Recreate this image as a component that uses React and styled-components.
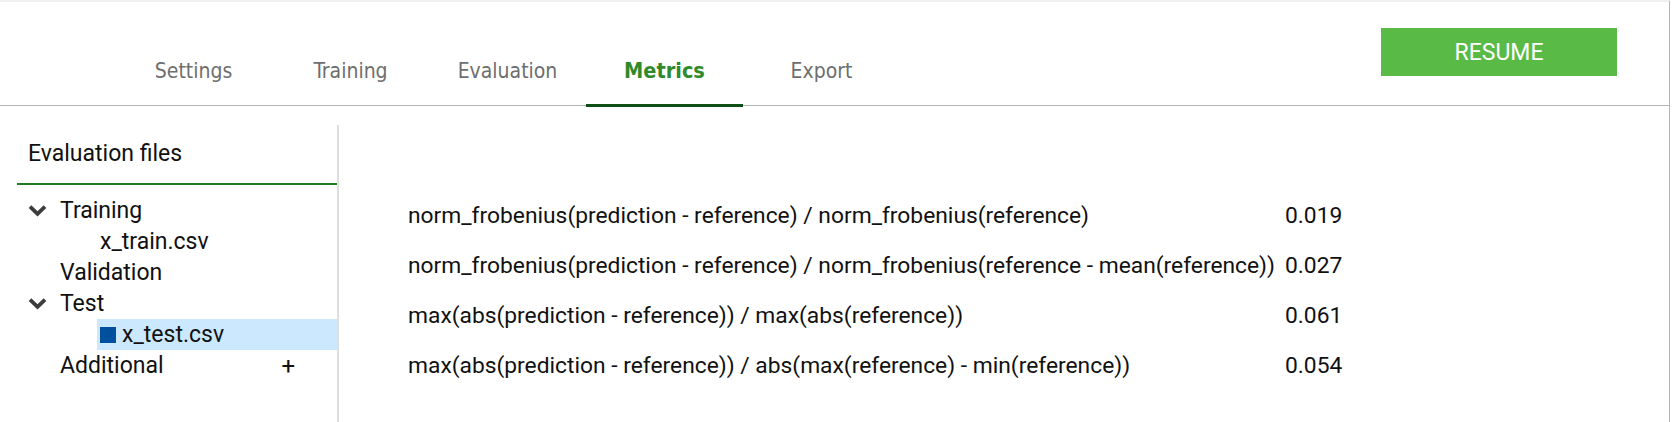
import React from 'react'
import styled, { createGlobalStyle } from 'styled-components';

const GlobalStyle = createGlobalStyle`
    html, body {
        margin : 0;
        padding : 0;
        background-color : #fff;
    }
`;

const Page = styled.div`
    width : 1670px;
    height : 422px;
    border-right : 1px solid #b4b4b4;
    border-top : 2px solid #f0f0f0;
    box-sizing : border-box;
    display : flex;
    flex-direction : column;
    overflow : hidden;
`;

const Header = styled.div`
    display : flex;
    align-items : flex-end;
    height : 103px;
    padding : 0 52px 0 115px;
    border-bottom : 1px solid #b4b4b4;
    flex-shrink : 0;
`;

const Tab = styled.div`
    width : 157px;
    text-align : center;
    font-family : "DejaVu Sans Condensed", "DejaVu Sans", sans-serif;
    font-size : ${props => props.$active ? '21.5px' : '21px'};
    line-height : 30px;
    padding-bottom : 18px;
    margin-bottom : -2px;
    color : ${props => props.$active ? '#2f8a2a' : '#6e6e6e'};
    font-weight : ${props => props.$active ? 'bold' : 'normal'};
    border-bottom : 3px solid ${props => props.$active ? '#0d4f14' : 'transparent'};
`;

const ResumeButton = styled.button`
    align-self : flex-start;
    margin : 26px 0 0 auto;
    width : 236px;
    height : 48px;
    border : none;
    background-color : #59bb45;
    color : #fff;
    font-family : Roboto, sans-serif;
    font-size : 23px;
    cursor : pointer;
`;

const Body = styled.div`
    display : flex;
    flex : 1;
    min-height : 0;
`;

const Sidebar = styled.div`
    width : 337px;
    margin-top : 19px;
    border-right : 2px solid #dedede;
    flex-shrink : 0;
    font-family : Roboto, sans-serif;
    font-size : 23px;
    color : #111;
`;

const SidebarTitle = styled.div`
    margin-left : 17px;
    padding : 14px 0 14px 11px;
    line-height : 30px;
    border-bottom : 2px solid #1f7a23;
`;

const Tree = styled.div`
    padding-top : 10px;
`;

const TreeRow = styled.div`
    display : flex;
    align-items : center;
    height : 31px;
    margin-left : ${props => props.$level === 1 ? '97px' : '0'};
    padding-left : ${props => props.$level === 1 ? '3px' : '28px'};
    background-color : ${props => props.$selected ? '#cce8ff' : 'transparent'};
`;

const Toggle = styled.span`
    width : 32px;
    display : flex;
    align-items : center;
    flex-shrink : 0;
`;

const FileMark = styled.span`
    width : 16px;
    height : 16px;
    margin-right : 6px;
    background-color : #00509d;
`;

const AddButton = styled.span`
    margin-left : auto;
    margin-right : 42px;
    font-size : 24px;
`;

const Content = styled.div`
    flex : 1;
    padding : 84px 0 0 69px;
`;

const MetricsTable = styled.div`
    display : grid;
    grid-template-columns : max-content max-content;
    grid-auto-rows : 50px;
    column-gap : 10px;
    align-items : center;
    font-family : Roboto, sans-serif;
    font-size : 22.8px;
    color : #111;
`;

const Chevron = () => (
    <svg width='19' height='13' viewBox='0 0 19 13'>
        <path d='M2 2.6 L9.5 9.8 L17 2.6' fill='none' stroke='#3c3c3c' strokeWidth='3.8' />
    </svg>
)

const metrics = [
    ['norm_frobenius(prediction - reference) / norm_frobenius(reference)', '0.019'],
    ['norm_frobenius(prediction - reference) / norm_frobenius(reference - mean(reference))', '0.027'],
    ['max(abs(prediction - reference)) / max(abs(reference))', '0.061'],
    ['max(abs(prediction - reference)) / abs(max(reference) - min(reference))', '0.054'],
];

const App = () => {
    return (
        <Page>
            <GlobalStyle />
            <Header>
                <Tab>Settings</Tab>
                <Tab>Training</Tab>
                <Tab>Evaluation</Tab>
                <Tab $active>Metrics</Tab>
                <Tab>Export</Tab>
                <ResumeButton>RESUME</ResumeButton>
            </Header>
            <Body>
                <Sidebar>
                    <SidebarTitle>Evaluation files</SidebarTitle>
                    <Tree>
                        <TreeRow><Toggle><Chevron /></Toggle>Training</TreeRow>
                        <TreeRow $level={1}>x_train.csv</TreeRow>
                        <TreeRow><Toggle />Validation</TreeRow>
                        <TreeRow><Toggle><Chevron /></Toggle>Test</TreeRow>
                        <TreeRow $level={1} $selected><FileMark />x_test.csv</TreeRow>
                        <TreeRow><Toggle />Additional<AddButton>+</AddButton></TreeRow>
                    </Tree>
                </Sidebar>
                <Content>
                    <MetricsTable>
                        {metrics.map(([label, value]) => (
                            <React.Fragment key={label}>
                                <span>{label}</span>
                                <span>{value}</span>
                            </React.Fragment>
                        ))}
                    </MetricsTable>
                </Content>
            </Body>
        </Page>
    )
}

export default App
